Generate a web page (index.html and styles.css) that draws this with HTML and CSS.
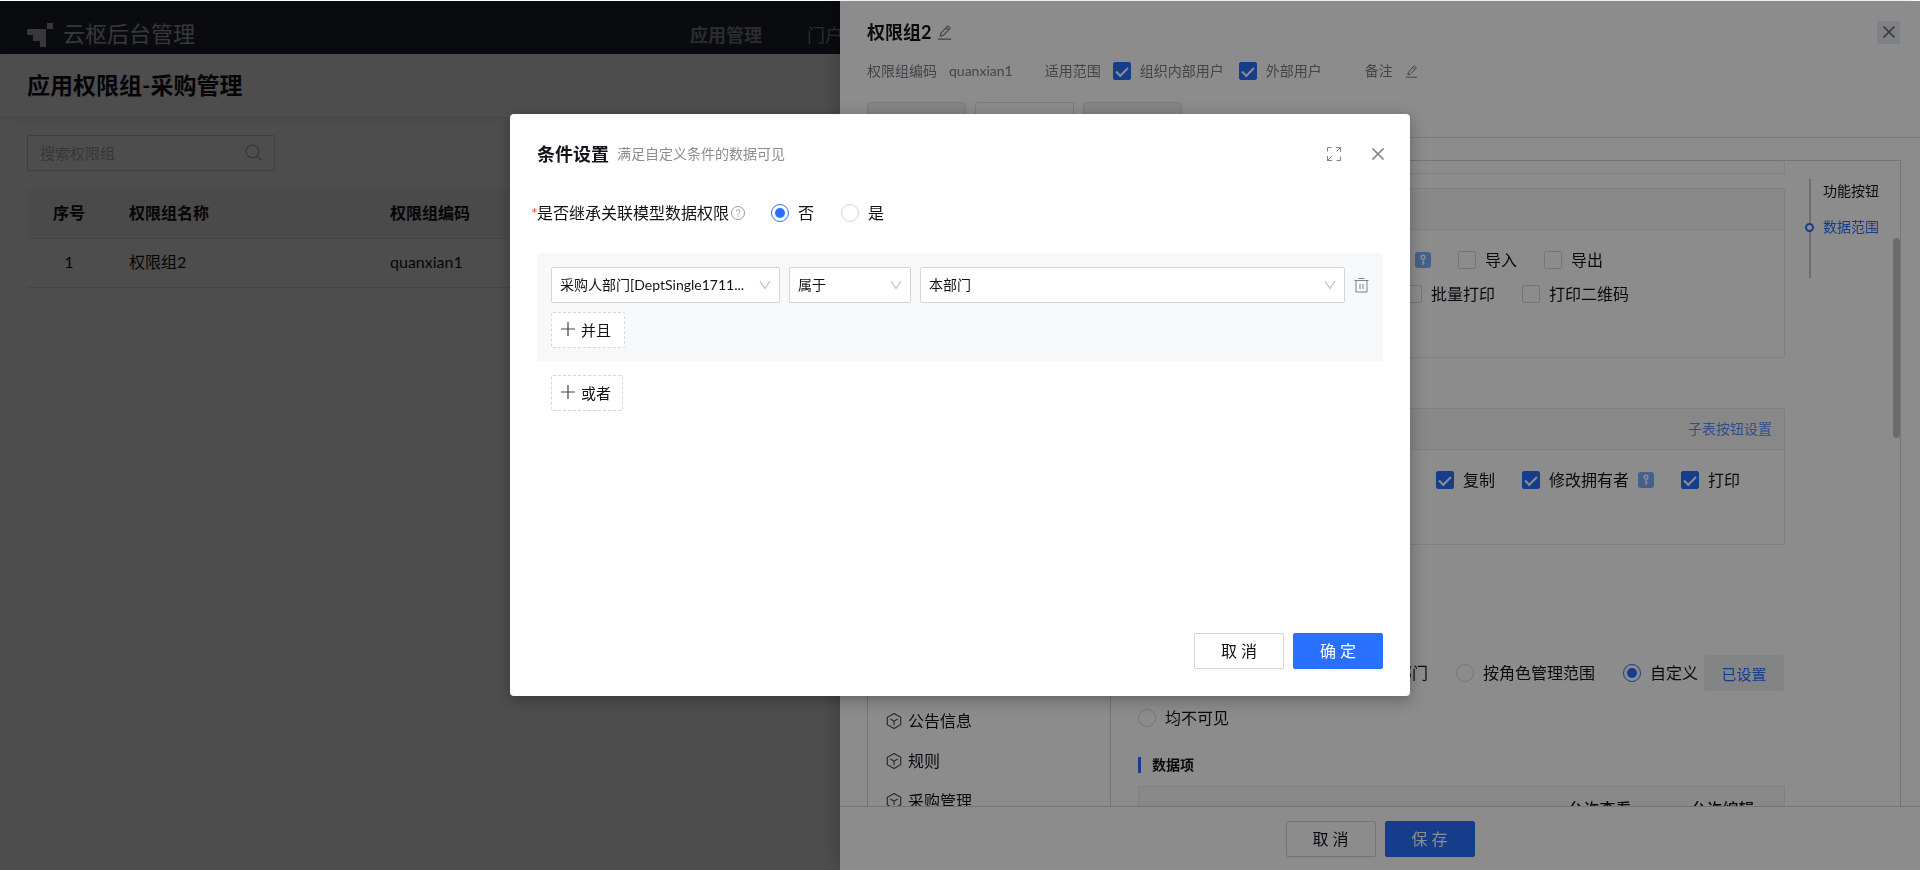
FILE: index.html
```html
<!DOCTYPE html>
<html lang="zh-CN">
<head>
  <meta charset="UTF-8">
  <meta name="viewport" content="width=device-width, initial-scale=1.0">
  <title>云枢后台管理</title>
  <link rel="stylesheet" href="styles.css">
</head>
<body>

  <svg class="sprite" aria-hidden="true">
    <symbol id="i-cube" viewBox="0 0 16 16">
      <path d="M8 0.5 L14.7 4.2 V11.8 L8 15.5 L1.3 11.8 V4.2 Z M4.3 6 L8 8.2 L11.7 6 M8 8.2 V12.2" fill="none" stroke="currentColor" stroke-width="1.1"/>
    </symbol>
    <symbol id="i-edit" viewBox="0 0 16 16">
      <path d="M1 15 H15 M3.5 12 L4.3 8.6 L11.4 1 L14 3.4 L6.8 11 Z M9.6 3 L12.2 5.4" fill="none" stroke="currentColor" stroke-width="1.2"/>
    </symbol>
    <symbol id="i-close" viewBox="0 0 14 14">
      <path d="M1.5 1.5 L12.5 12.5 M12.5 1.5 L1.5 12.5" fill="none" stroke="currentColor" stroke-width="1.7"/>
    </symbol>
    <symbol id="i-down" viewBox="0 0 12 12">
      <path d="M1 2 L6 9.5 L11 2" fill="none" stroke="currentColor" stroke-width="1.1"/>
    </symbol>
    <symbol id="i-plus" viewBox="0 0 14 14">
      <path d="M7 0 V14 M0 7 H14" fill="none" stroke="currentColor" stroke-width="1.2"/>
    </symbol>
    <symbol id="i-key" viewBox="0 0 16 16">
      <rect width="16" height="16" rx="3" fill="#7fb0ff"/>
      <path d="M8 7 V13 M8 10.8 H9.6" fill="none" stroke="#fff" stroke-width="1.4"/>
      <circle cx="8" cy="5.2" r="1.9" fill="none" stroke="#fff" stroke-width="1.4"/>
    </symbol>
  </svg>

  <!-- 主页面 -->
  <div class="app">
    <header class="topbar">
      <div class="brand">
        <svg class="brand-logo" viewBox="0 0 26 24" aria-hidden="true">
          <path d="M0 6 H19 V24 H13 V18 H6 V12 H0 Z M20 0 H26 V6 H20 Z" fill="#b9bbbf"/>
        </svg>
        <span class="brand-name">云枢后台管理</span>
      </div>
      <nav class="topnav">
        <a href="#" class="active">应用管理</a>
        <a href="#">门户管理</a>
      </nav>
    </header>

    <div class="page-title">
      <h1>应用权限组-采购管理</h1>
    </div>

    <main class="page-body">
      <div class="search">
        <input type="text" placeholder="搜索权限组" aria-label="搜索权限组">
        <svg viewBox="0 0 16 16" aria-hidden="true">
          <circle cx="7" cy="7" r="6" fill="none" stroke="currentColor"/>
          <path d="M11.3 11.3 L15.5 15.5" stroke="currentColor"/>
        </svg>
      </div>
      <table class="group-table">
        <thead>
          <tr>
            <th class="col-no">序号</th>
            <th class="col-name">权限组名称</th>
            <th>权限组编码</th>
          </tr>
        </thead>
        <tbody>
          <tr>
            <td class="col-no">1</td>
            <td>权限组2</td>
            <td>quanxian1</td>
          </tr>
        </tbody>
      </table>
    </main>
  </div>

  <div class="mask"></div>

  <!-- 权限组抽屉 -->
  <aside class="drawer">
    <header class="drawer-head">
      <div class="drawer-title">
        <h2>权限组2</h2>
        <svg class="icon-edit" aria-hidden="true"><use href="#i-edit"/></svg>
        <button class="drawer-close" aria-label="关闭"><svg aria-hidden="true"><use href="#i-close"/></svg></button>
      </div>
      <div class="meta">
        <span class="meta-code">权限组编码</span>
        <span class="meta-value">quanxian1</span>
        <span class="meta-scope">适用范围</span>
        <label class="check"><input type="checkbox" checked>组织内部用户</label>
        <label class="check"><input type="checkbox" checked>外部用户</label>
        <span class="meta-note">备注</span>
        <svg class="icon-edit small" aria-hidden="true"><use href="#i-edit"/></svg>
      </div>
      <div class="tabs">
        <button>权限范围</button>
        <button class="active">数据权限</button>
        <button>成员管理</button>
      </div>
    </header>

    <div class="drawer-body">
      <div class="panel">
        <ul class="tree">
          <li><svg><use href="#i-cube"/></svg>供应商</li>
          <li><svg><use href="#i-cube"/></svg>合同</li>
          <li><svg><use href="#i-cube"/></svg>订单</li>
          <li><svg><use href="#i-cube"/></svg>入库</li>
          <li><svg><use href="#i-cube"/></svg>出库</li>
          <li><svg><use href="#i-cube"/></svg>付款</li>
          <li><svg><use href="#i-cube"/></svg>发票</li>
          <li><svg><use href="#i-cube"/></svg>询价</li>
          <li><svg><use href="#i-cube"/></svg>报价</li>
          <li><svg><use href="#i-cube"/></svg>验收</li>
          <li><svg><use href="#i-cube"/></svg>退货</li>
          <li><svg><use href="#i-cube"/></svg>物料</li>
          <li><svg><use href="#i-cube"/></svg>预算</li>
          <li><svg><use href="#i-cube"/></svg>公告信息</li>
          <li><svg><use href="#i-cube"/></svg>规则</li>
          <li><svg><use href="#i-cube"/></svg>采购管理</li>
        </ul>

        <div class="settings">
          <section class="card card-cut"></section>

          <section class="card">
            <div class="card-head"></div>
            <div class="card-body tall">
              <div class="checks">
                <label class="check"><input type="checkbox">新增</label>
                <label class="check"><input type="checkbox">删除</label>
                <label class="check"><input type="checkbox">转交人<svg class="key"><use href="#i-key"/></svg></label>
                <label class="check"><input type="checkbox">导入</label>
                <label class="check"><input type="checkbox">导出</label>
              </div>
              <div class="checks">
                <label class="check"><input type="checkbox">批量修改<svg class="key"><use href="#i-key"/></svg></label>
                <label class="check"><input type="checkbox">二维码</label>
                <label class="check"><input type="checkbox">批量打印</label>
                <label class="check"><input type="checkbox">打印二维码</label>
              </div>
            </div>
          </section>

          <section class="card card-form">
            <div class="card-head"><a href="#">子表按钮设置</a></div>
            <div class="card-body">
              <div class="checks">
                <label class="check"><input type="checkbox" checked>流程日志<svg class="key"><use href="#i-key"/></svg></label>
                <label class="check"><input type="checkbox" checked>表单评论区</label>
                <label class="check"><input type="checkbox" checked>复制</label>
                <label class="check"><input type="checkbox" checked>修改拥有者<svg class="key"><use href="#i-key"/></svg></label>
                <label class="check"><input type="checkbox" checked>打印</label>
              </div>
            </div>
          </section>

          <div class="scope">
            <label class="check"><input type="radio" name="scope">全部数据可见</label>
            <label class="check"><input type="radio" name="scope">本人及所在部门</label>
            <label class="check"><input type="radio" name="scope">按角色管理范围</label>
            <span class="custom">
              <label class="check"><input type="radio" name="scope" checked>自定义</label>
              <button class="btn-set">已设置</button>
            </span>
            <label class="check"><input type="radio" name="scope">均不可见</label>
          </div>

          <h3 class="sub-title">数据项</h3>
          <table class="field-table">
            <thead>
              <tr><th></th><th class="col-allow">允许查看</th><th class="col-allow">允许编辑</th></tr>
            </thead>
          </table>
        </div>

        <nav class="anchors">
          <a href="#">功能按钮</a>
          <a href="#" class="active">数据范围</a>
        </nav>
        <div class="scroll-thumb"></div>
      </div>
    </div>

    <footer class="drawer-foot">
      <button class="btn">取 消</button>
      <button class="btn primary">保 存</button>
    </footer>
  </aside>

  <div class="mask"></div>

  <!-- 条件设置弹窗 -->
  <div class="modal-wrap">
    <div class="modal" role="dialog" aria-labelledby="modal-title">
      <header class="modal-head">
        <h2 id="modal-title">条件设置</h2>
        <span class="modal-tip">满足自定义条件的数据可见</span>
        <button class="icon-btn" aria-label="全屏">
          <svg viewBox="0 0 14 14" aria-hidden="true">
            <path d="M0.5 4.5 V0.5 H4.5 M9 0.5 H13.5 V5 M13.5 0.5 L9.5 4.5 M0.5 9 V13.5 H5 M0.5 13.5 L4.5 9.5 M13.5 9.5 V13.5 H9.5" fill="none" stroke="currentColor"/>
          </svg>
        </button>
        <button class="icon-btn" aria-label="关闭"><svg aria-hidden="true"><use href="#i-close"/></svg></button>
      </header>

      <div class="inherit">
        <span class="required">*</span>
        <span>是否继承关联模型数据权限</span>
        <svg class="help" viewBox="0 0 14 14" aria-hidden="true">
          <circle cx="7" cy="7" r="6.5" fill="none" stroke="currentColor"/>
          <path d="M5.2 5.6 C5.2 3.2 8.8 3.2 8.8 5.5 C8.8 6.8 7 6.8 7 8.5 M7 9.6 V10.7" fill="none" stroke="currentColor"/>
        </svg>
        <div class="inherit-options">
          <label class="check"><input type="radio" name="inherit" checked>否</label>
          <label class="check"><input type="radio" name="inherit">是</label>
        </div>
      </div>

      <div class="rule-group">
        <div class="rule">
          <div class="select field">
            <select aria-label="字段"><option>采购人部门[DeptSingle1711...</option></select>
            <svg aria-hidden="true"><use href="#i-down"/></svg>
          </div>
          <div class="select operator">
            <select aria-label="条件"><option>属于</option></select>
            <svg aria-hidden="true"><use href="#i-down"/></svg>
          </div>
          <div class="select value">
            <select aria-label="值"><option>本部门</option></select>
            <svg aria-hidden="true"><use href="#i-down"/></svg>
          </div>
          <button class="trash" aria-label="删除">
            <svg viewBox="0 0 14 15" aria-hidden="true">
              <path d="M4 0.5 H10 M0 2.5 H14 M1.5 2.5 V14 H12.5 V2.5 M5.5 6 V11 M8.5 6 V11" fill="none" stroke="currentColor"/>
            </svg>
          </button>
        </div>
        <button class="btn-add"><svg aria-hidden="true"><use href="#i-plus"/></svg>并且</button>
      </div>
      <button class="btn-add btn-or"><svg aria-hidden="true"><use href="#i-plus"/></svg>或者</button>

      <footer class="modal-foot">
        <button class="btn">取 消</button>
        <button class="btn primary">确 定</button>
      </footer>
    </div>
  </div>

</body>
</html>
```

FILE: styles.css
```css
*, *::before, *::after { box-sizing: border-box; }
body {
  margin: 0;
  padding-top: 1px;
  height: 100vh;
  overflow: hidden;
  background: #fff;
  color: #111218;
  font-family: Lato, "Noto Sans CJK SC", sans-serif;
  font-size: 16px;
  line-height: 24px;
}
h1, h2, h3, ul { margin: 0; padding: 0; }
a { color: inherit; text-decoration: none; }
button, input, select {
  font-family: inherit;
  font-size: inherit;
  color: inherit;
}
button {
  padding: 0;
  border: none;
  background: none;
  cursor: pointer;
}
svg { display: block; flex: none; }
.sprite { position: absolute; width: 0; height: 0; }

/* 主页面 */
.topbar {
  display: flex;
  align-items: center;
  height: 53px;
  padding: 14px 27px 0;
  background: #1f2533;
  color: #b9bbbf;
}
.brand {
  display: flex;
  align-items: center;
  gap: 10px;
}
.brand-logo { width: 26px; height: 24px; }
.brand-name {
  padding-bottom: 2px;
  font-size: 22px;
}
.topnav {
  display: flex;
  gap: 45px;
  margin-left: 495px;
  font-size: 18px;
  color: #8f939c;
}
.topnav .active { font-weight: bold; }
.page-title {
  padding: 15px 27px 16px;
  border-bottom: 1px solid #e8eaed;
  box-shadow: 0 2px 12px rgba(0,0,0,0.05);
}
.page-title h1 {
  font-size: 23px;
  line-height: 32px;
}
.page-body { padding: 17px 27px; }
.search {
  position: relative;
  width: 248px;
}
.search input {
  display: block;
  width: 100%;
  height: 36px;
  padding: 0 40px 0 12px;
  border: 1px solid #d0d2d6;
  border-radius: 2px;
  background: #fff;
  font-size: 15px;
}
.search input::placeholder { color: #b4b6bc; }
.search svg {
  position: absolute;
  top: 9px;
  right: 13px;
  width: 17px;
  height: 17px;
  color: #aaa;
}
.group-table {
  width: 100%;
  margin-top: 18px;
  border-collapse: collapse;
  table-layout: fixed;
}
.group-table th, .group-table td {
  height: 49px;
  padding: 0 18px 1px;
  border-bottom: 1px solid #e3e4e6;
  text-align: left;
}
.group-table th {
  background: #f4f5f6;
  font-weight: bold;
}
.group-table .col-no { width: 84px; text-align: center; }
.group-table .col-name { width: 261px; }

.mask {
  position: fixed;
  inset: 1px 0 0;
  background: rgba(0,0,0,0.45);
}

/* 复选框和单选框 */
.check {
  display: inline-flex;
  align-items: center;
  gap: 9px;
  white-space: nowrap;
}
.check input {
  appearance: none;
  display: grid;
  place-items: center;
  flex: none;
  width: 18px;
  height: 18px;
  margin: 0;
  border: 1px solid #d4d5d6;
  border-radius: 2px;
  background: #fff;
}
.check input[type="checkbox"]:checked {
  border-color: #2970ff;
  background: #2970ff;
}
.check input[type="checkbox"]:checked::after {
  content: "";
  width: 12px;
  height: 7px;
  border: solid #fff;
  border-width: 0 0 2px 2px;
  transform: translateY(-1px) rotate(-45deg);
}
.check input[type="radio"] { border-radius: 50%; }
.check input[type="radio"]:checked { border-color: #2970ff; }
.check input[type="radio"]:checked::after {
  content: "";
  width: 10px;
  height: 10px;
  border-radius: 50%;
  background: #2970ff;
}
.key { width: 16px; height: 16px; }

.btn {
  width: 90px;
  height: 36px;
  padding-bottom: 2px;
  border: 1px solid #d4d5d6;
  border-radius: 2px;
  background: #fff;
  box-shadow: 0 2px 0 rgba(0,0,0,0.02);
}
.btn.primary {
  border-color: #2970ff;
  background: #2970ff;
  color: #fff;
}

/* 抽屉 */
.drawer {
  position: fixed;
  top: 1px;
  right: 0;
  bottom: 0;
  display: flex;
  flex-direction: column;
  width: 1080px;
  background: #fff;
  box-shadow: -6px 0 16px rgba(0,0,0,0.15);
}
.drawer-head {
  padding: 19px 20px 0 27px;
  border-bottom: 1px solid #dcdde0;
}
.drawer-title {
  display: flex;
  align-items: center;
  gap: 6px;
  height: 24px;
}
.drawer-title h2 { font-size: 18px; }
.icon-edit {
  width: 15px;
  height: 15px;
  color: #777;
}
.icon-edit.small { width: 13px; height: 13px; }
.drawer-close {
  display: grid;
  place-items: center;
  width: 23px;
  height: 23px;
  margin-left: auto;
  background: #e8edf3;
  color: #666;
}
.drawer-close svg { width: 14px; height: 14px; }
.meta {
  display: flex;
  align-items: center;
  height: 24px;
  margin-top: 15px;
  font-size: 14px;
  color: #7b7c80;
}
.meta-value { margin-left: 12px; }
.meta-scope { margin: 0 12px 0 32px; }
.meta .check + .check { margin-left: 15px; }
.meta-note { margin: 0 12px 0 43px; }
.tabs {
  display: flex;
  gap: 9px;
  margin-top: 19px;
}
.tabs button {
  width: 99px;
  height: 35px;
  padding-top: 2px;
  border: 1px solid #dcdfe4;
  border-bottom: none;
  border-radius: 4px 4px 0 0;
  background: #eef1f5;
  font-size: 15px;
}
.tabs .active {
  background: #fff;
  color: #2970ff;
}
.drawer-body {
  flex: 1;
  min-height: 0;
  padding: 22px 19px 0 27px;
  overflow: hidden;
}
.panel {
  position: relative;
  display: flex;
  height: 100%;
  overflow: hidden;
  border: 1px solid #d4d5d6;
  border-bottom: none;
}
.tree {
  flex: none;
  width: 243px;
  padding: 20px 18px;
  border-right: 1px solid #d4d5d6;
  list-style: none;
}
.tree li {
  display: flex;
  align-items: center;
  gap: 6px;
  height: 40px;
}
.tree svg { width: 16px; height: 16px; color: #444; }
.settings {
  flex: 1;
  min-width: 0;
  padding-left: 27px;
}
.card {
  margin-bottom: 15px;
  border: 1px solid #e8e9eb;
  border-radius: 2px;
}
.card-cut {
  height: 13px;
  margin-bottom: 14px;
  border-top: none;
}
.card-head {
  display: flex;
  align-items: center;
  justify-content: flex-end;
  height: 41px;
  padding: 0 12px;
  border-bottom: 1px solid #e8e9eb;
  background: #f7f8fa;
  font-size: 14px;
  color: #5b8ff9;
}
.card-body {
  height: 94px;
  padding: 18px 20px;
}
.card-body.tall { height: 127px; }
.checks {
  display: flex;
  gap: 27px;
  margin-bottom: 10px;
}
.card-form { margin-top: 50px; }
.scope {
  display: flex;
  flex-wrap: wrap;
  align-items: center;
  gap: 9px 28px;
  margin-top: 110px;
}
.scope > .check { height: 35px; }
.custom {
  display: flex;
  align-items: center;
  gap: 6px;
}
.btn-set {
  width: 80px;
  height: 36px;
  border-radius: 2px;
  background: #eef1f5;
  font-size: 15px;
  color: #2970ff;
}
.sub-title {
  margin: 22px 0 13px;
  padding-left: 11px;
  border-left: 3px solid #2970ff;
  font-size: 14px;
  line-height: 16px;
}
.field-table {
  width: 100%;
  border: 1px solid #e8e9eb;
  border-spacing: 0;
  table-layout: fixed;
  background: #f7f8fa;
}
.field-table th {
  height: 46px;
  padding: 0 0 2px;
  font-weight: 500;
}
.field-table .col-allow { width: 123px; }
.anchors {
  display: flex;
  flex: none;
  flex-direction: column;
  gap: 12px;
  width: 91px;
  height: 99px;
  margin: 18px 0 0 24px;
  padding-left: 12px;
  border-left: 2px solid #c8c9cb;
  font-size: 14px;
}
.anchors .active {
  position: relative;
  color: #2970ff;
}
.anchors .active::before {
  content: "";
  position: absolute;
  top: 8px;
  left: -18px;
  width: 9px;
  height: 9px;
  border: 2px solid #2970ff;
  border-radius: 50%;
  background: #fff;
}
.scroll-thumb {
  position: absolute;
  top: 77px;
  right: 0;
  width: 7px;
  height: 200px;
  border-radius: 4px;
  background: #c3c7c6;
}
.drawer-foot {
  display: flex;
  justify-content: center;
  gap: 9px;
  height: 64px;
  padding-top: 14px;
  border-top: 1px solid #d4d5d6;
}

/* 弹窗 */
.modal-wrap {
  position: fixed;
  inset: 114px 0 auto;
  display: flex;
  justify-content: center;
}
.modal {
  display: flex;
  flex-direction: column;
  width: 900px;
  min-height: 582px;
  padding: 26px 27px 27px;
  border-radius: 4px;
  background: #fff;
  box-shadow: 0 4px 16px rgba(0,0,0,0.3);
}
.modal-head {
  display: flex;
  align-items: center;
  height: 28px;
  margin-right: -2px;
}
.modal-head h2 { font-size: 18px; }
.modal-tip {
  margin: 0 auto 0 8px;
  font-size: 14px;
  color: #8c8d91;
}
.icon-btn {
  margin-left: 30px;
  color: #808185;
}
.icon-btn svg { width: 14px; height: 14px; }
.inherit {
  display: flex;
  align-items: center;
  height: 24px;
  margin: 33px 0 28px -6px;
}
.required {
  width: 6px;
  color: #f5483b;
}
.help {
  width: 14px;
  height: 14px;
  margin-left: 2px;
  color: #999;
}
.inherit-options {
  display: flex;
  gap: 27px;
  margin-left: 26px;
}
.rule-group {
  padding: 14px 14px 13px;
  border-radius: 2px;
  background: #f7f8fa;
}
.rule {
  display: flex;
  align-items: center;
  gap: 9px;
  margin-bottom: 9px;
}
.select { position: relative; }
.select select {
  appearance: none;
  display: block;
  width: 100%;
  height: 36px;
  padding: 0 24px 2px 8px;
  border: 1px solid #d4d5d6;
  border-radius: 2px;
  background: #fff;
  font-size: 14px;
}
.select svg {
  position: absolute;
  top: 12px;
  right: 9px;
  width: 12px;
  height: 12px;
  color: #b8b9bc;
  pointer-events: none;
}
.field { width: 229px; }
.operator { width: 122px; }
.value { flex: 1; }
.trash { color: #808185; }
.trash svg { width: 15px; height: 15px; }
.btn-add {
  display: flex;
  align-items: center;
  gap: 6px;
  width: 74px;
  height: 36px;
  padding: 0 0 2px 9px;
  border: 1px dashed #d4d5d6;
  border-radius: 2px;
  background: #fff;
  font-size: 15px;
}
.btn-add svg { width: 14px; height: 14px; color: #444; }
.btn-or {
  width: 72px;
  margin: 14px 0 0 14px;
}
.modal-foot {
  display: flex;
  justify-content: flex-end;
  gap: 9px;
  margin-top: auto;
}
```
